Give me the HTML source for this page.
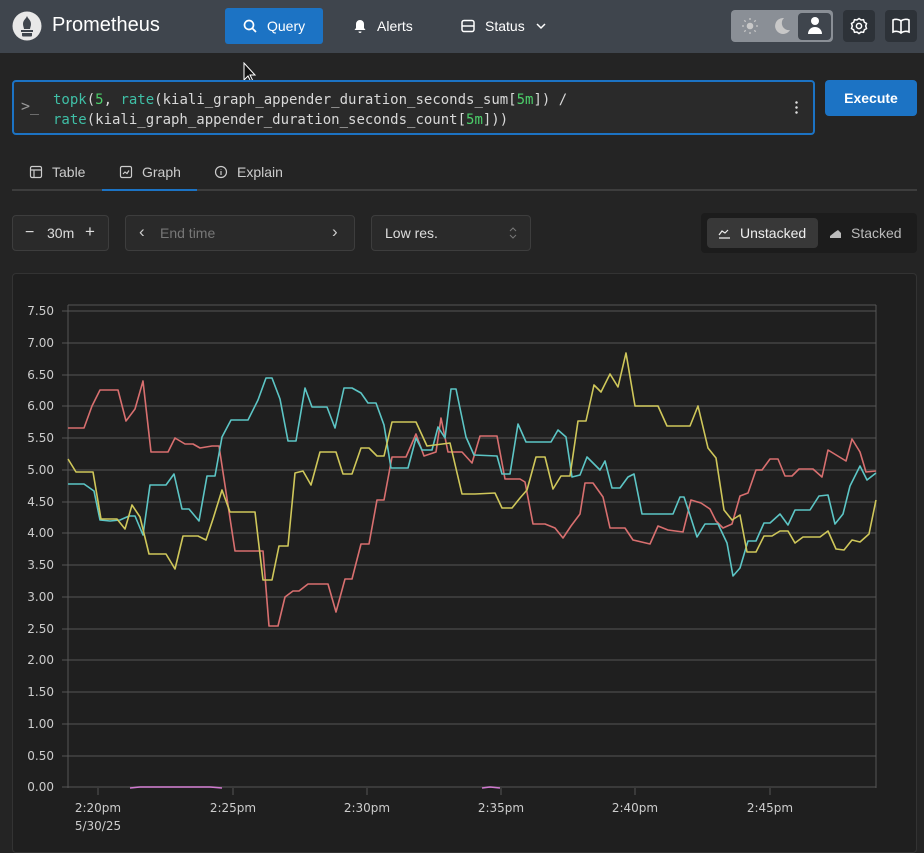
<!DOCTYPE html>
<html><head><meta charset="utf-8"><style>
*{box-sizing:border-box;margin:0;padding:0}
body{width:924px;height:840px;background:#242424;font-family:"Liberation Sans",sans-serif;color:#c9c9c9;position:relative;overflow:hidden;font-size:14px}
.hdr{position:absolute;left:0;top:0;width:924px;height:53px;background:#3f454d}
.abs{position:absolute}
.btn{position:absolute;display:flex;align-items:center;gap:9px;color:#fff;font-size:14px}
.box{position:absolute;border:1px solid #3d3d3d;border-radius:4px;background:#2a2a2a}
.mono{font-family:"DejaVu Sans Mono","Liberation Mono",monospace;font-size:14px}
</style></head><body>
<div class="hdr"></div>
<svg class="abs" style="left:12px;top:11px" width="30" height="30" viewBox="0 0 30 30"><circle cx="15" cy="15" r="14.5" fill="#e8e8e8"/><path d="M9 19h12v2H9zM10 22h10v2.5a1 1 0 0 1-1 1h-8a1 1 0 0 1-1-1z" fill="#3f454d"/><path d="M15 5c1 3 4 4 4 8 0 2-1 4-1 5h-6c0-1-1-3-1-5 0-4 3-5 4-8z" fill="#3f454d"/></svg>
<div class="abs" style="left:52px;top:14px;font-size:20px;color:#fff">Prometheus</div>
<div class="abs" style="left:225px;top:8px;width:98px;height:36px;background:#1c73c4;border-radius:3px"></div>
<div class="btn" style="left:242px;top:18px"><svg width="16" height="16" viewBox="0 0 16 16" fill="none" stroke="#fff" stroke-width="1.7"><circle cx="7" cy="7" r="4.5"/><path d="M10.5 10.5l3.5 3.5"/></svg>Query</div>
<div class="btn" style="left:352px;top:18px"><svg width="16" height="16" viewBox="0 0 16 16" fill="#fff"><path d="M8 2a4 4 0 0 1 4 4v4l1.5 2h-11L4 10V6a4 4 0 0 1 4-4zM6.5 13.5h3a1.5 1.5 0 0 1-3 0z"/></svg>Alerts</div>
<div class="btn" style="left:460px;top:18px"><svg width="16" height="16" viewBox="0 0 16 16" fill="none" stroke="#fff" stroke-width="1.5"><rect x="2" y="2.5" width="12" height="11" rx="2"/><path d="M2 8h12"/></svg>Status<svg width="14" height="14" viewBox="0 0 14 14" fill="none" stroke="#fff" stroke-width="1.5"><path d="M3 5l4 4 4-4"/></svg></div>
<div class="abs" style="left:731px;top:10px;width:102px;height:32px;background:#8a8f96;border-radius:4px"></div>
<div class="abs" style="left:798px;top:13px;width:33px;height:27px;background:#3f454d;border-radius:4px"></div>
<svg class="abs" style="left:741px;top:17px" width="18" height="18" viewBox="0 0 18 18"><circle cx="9" cy="9" r="3.3" fill="#c8c8c8"/><g stroke="#c8c8c8" stroke-width="1.3"><path d="M9 1v2M9 15v2M1 9h2M15 9h2M3.3 3.3l1.4 1.4M13.3 13.3l1.4 1.4M3.3 14.7l1.4-1.4M13.3 4.7l1.4-1.4"/></g></svg>
<svg class="abs" style="left:772px;top:16px" width="20" height="20" viewBox="0 0 20 20"><path d="M12 2a8 8 0 1 0 6 12A7 7 0 0 1 12 2z" fill="#c8c8c8"/></svg>
<svg class="abs" style="left:806px;top:16px" width="18" height="20" viewBox="0 0 18 20" fill="#fff"><circle cx="9" cy="5" r="4"/><path d="M2 18c0-4 3-7 7-7s7 3 7 7z"/></svg>
<div class="abs" style="left:843px;top:10px;width:32px;height:32px;background:#2d3238;border-radius:4px"></div>
<svg class="abs" style="left:850px;top:17px" width="18" height="18" viewBox="0 0 18 18" fill="none" stroke="#fff" stroke-width="1.5"><path d="M9 1.5l2 1.5 2.5-.3.8 2.4 2.2 1.4-.8 2.5.8 2.5-2.2 1.4-.8 2.4-2.5-.3-2 1.5-2-1.5-2.5.3-.8-2.4-2.2-1.4.8-2.5-.8-2.5 2.2-1.4.8-2.4 2.5.3z"/><circle cx="9" cy="9" r="2.6"/></svg>
<div class="abs" style="left:885px;top:10px;width:32px;height:32px;background:#2d3238;border-radius:4px"></div>
<svg class="abs" style="left:891px;top:17px" width="20" height="18" viewBox="0 0 20 18" fill="none" stroke="#fff" stroke-width="1.6"><path d="M10 4v12M10 4C8 2 4 2 2 3v12c2-1 6-1 8 1 2-2 6-2 8-1V3c-2-1-6-1-8 1z"/></svg>
<svg class="abs" style="left:243px;top:62px" width="14" height="22" viewBox="0 0 14 22"><path d="M1 1v17l4-4 3 6 2-1-3-6h5z" fill="#111" stroke="#fff" stroke-width="1"/></svg>

<div class="abs" style="left:12px;top:80px;width:803px;height:55px;border:2px solid #1c73c4;border-radius:4px;background:#2a2a2a"></div>
<div class="abs mono" style="left:21px;top:97px;color:#999;font-size:15px">&gt;_</div>
<div class="abs mono" style="left:53px;top:90px;line-height:20px;color:#d8d8d8;white-space:pre"><span style="color:#3fbfa6">topk</span>(<span style="color:#4ccf6a">5</span>, <span style="color:#3fbfa6">rate</span>(kiali_graph_appender_duration_seconds_sum[<span style="color:#4ccf6a">5m</span>]) /
<span style="color:#3fbfa6">rate</span>(kiali_graph_appender_duration_seconds_count[<span style="color:#4ccf6a">5m</span>]))</div>
<div class="abs" style="left:795px;top:100px;width:3px;height:14px;background:radial-gradient(circle,#ddd 1px,transparent 1.5px) 0 0/3px 5px"></div>
<div class="abs" style="left:825px;top:80px;width:92px;height:36px;background:#1c73c4;border-radius:4px;color:#fff;font-weight:bold;font-size:14px;text-align:center;line-height:36px">Execute</div>

<div class="abs" style="left:12px;top:189px;width:905px;height:2px;background:#3d3d3d"></div>
<div class="abs" style="left:102px;top:189px;width:95px;height:2px;background:#1c73c4"></div>
<div class="btn" style="left:29px;top:164px;color:#ccc"><svg width="14" height="14" viewBox="0 0 14 14" fill="none" stroke="#ccc" stroke-width="1.2"><rect x="1.5" y="1.5" width="11" height="11" rx="1.5"/><path d="M1.5 5h11M5 5v7.5"/></svg>Table</div>
<div class="btn" style="left:119px;top:164px;color:#ccc"><svg width="14" height="14" viewBox="0 0 14 14" fill="none" stroke="#ccc" stroke-width="1.2"><rect x="1.5" y="1.5" width="11" height="11" rx="1.5"/><path d="M4 9l2-2 2 1.5 2-3"/></svg>Graph</div>
<div class="btn" style="left:214px;top:164px;color:#ccc"><svg width="14" height="14" viewBox="0 0 14 14" fill="none" stroke="#ccc" stroke-width="1.2"><circle cx="7" cy="7" r="5.5"/><path d="M7 6v4M7 4v.5"/></svg>Explain</div>

<div class="box" style="left:12px;top:215px;width:97px;height:36px"></div>
<div class="abs" style="left:25px;top:224px;color:#ddd;font-size:16px">−</div>
<div class="abs" style="left:47px;top:225px;color:#ddd">30m</div>
<div class="abs" style="left:85px;top:222px;color:#ddd;font-size:17px">+</div>
<div class="box" style="left:125px;top:215px;width:230px;height:36px"></div>
<div class="abs" style="left:139px;top:222px;color:#ccc;font-size:17px">‹</div>
<div class="abs" style="left:160px;top:225px;color:#777">End time</div>
<div class="abs" style="left:332px;top:222px;color:#ccc;font-size:17px">›</div>
<div class="box" style="left:371px;top:215px;width:160px;height:36px"></div>
<div class="abs" style="left:385px;top:225px;color:#ddd">Low res.</div>
<svg class="abs" style="left:508px;top:226px" width="10" height="14" viewBox="0 0 10 14" fill="none" stroke="#777" stroke-width="1"><path d="M2 5l3-3 3 3M2 9l3 3 3-3"/></svg>
<div class="abs" style="left:701px;top:213px;width:216px;height:40px;background:#1c1c1c;border-radius:4px"></div>
<div class="abs" style="left:707px;top:218px;width:111px;height:30px;background:#383838;border-radius:4px"></div>
<div class="btn" style="left:718px;top:225px;color:#eee"><svg width="13" height="12" viewBox="0 0 13 12" fill="none" stroke="#eee" stroke-width="1.2"><path d="M1 11h11M1 8l3-4 3 2 3-3"/></svg>Unstacked</div>
<div class="btn" style="left:829px;top:225px;color:#bbb"><svg width="13" height="12" viewBox="0 0 13 12" fill="#bbb"><path d="M1 11h11V6L9 3 6 5 1 9z"/></svg>Stacked</div>

<div class="abs" style="left:12px;top:273px;width:905px;height:580px;border:1px solid #333;border-radius:4px;background:#1f1f1f"></div>
<svg class="abs" style="left:0;top:0" width="924" height="840" font-family="DejaVu Sans,sans-serif" font-size="12" fill="#ccc">
<g stroke="#3a3a3a" stroke-width="2">
<path d="M62 311H876M62 343H876M62 375H876M62 406H876M62 438H876M62 470H876M62 502H876M62 533H876M62 565H876M62 597H876M62 629H876M62 660H876M62 692H876M62 724H876M62 756H876M62 787H876"/>
<path d="M98 788v7M233 788v7M367 788v7M501 788v7M635 788v7M770 788v7"/></g>
<path d="M68 305V788M876 305V788M68 305H876" stroke="#555" stroke-width="1" fill="none"/>
<g text-anchor="end"><text x="54" y="315">7.50</text><text x="54" y="347">7.00</text><text x="54" y="379">6.50</text><text x="54" y="410">6.00</text><text x="54" y="442">5.50</text><text x="54" y="474">5.00</text><text x="54" y="506">4.50</text><text x="54" y="537">4.00</text><text x="54" y="569">3.50</text><text x="54" y="601">3.00</text><text x="54" y="633">2.50</text><text x="54" y="664">2.00</text><text x="54" y="696">1.50</text><text x="54" y="728">1.00</text><text x="54" y="760">0.50</text><text x="54" y="791">0.00</text></g>
<g text-anchor="middle"><text x="98" y="812">2:20pm</text><text x="98" y="830">5/30/25</text><text x="233" y="812">2:25pm</text><text x="367" y="812">2:30pm</text><text x="501" y="812">2:35pm</text><text x="635" y="812">2:40pm</text><text x="770" y="812">2:45pm</text></g>
<g fill="none" stroke-width="1.6" stroke-linejoin="round">
<path stroke="#d86f6f" d="M68 428L84 428L92 406L100 390L118 390L126 421L135 409L143 381L151 452L168 452L175 438L185 444L193 444L200 448L212 446L219 446L235 551L263 551L269 626L278 626L285 597L293 591L299 591L308 584L328 584L336 612L345 579L352 579L361 544L369 544L377 500L384 500L392 457L406 457L416 434L424 456L436 452L441 418L448 452L462 452L472 463L480 436L497 436L505 479L520 479L525 482L533 524L545 524L555 528L563 538L571 526L580 514L585 483L593 483L603 497L610 528L625 528L633 540L650 544L658 526L668 530L683 532L691 500L701 503L710 509L716 521L723 528L732 524L740 496L748 493L756 470L762 470L770 459L778 459L785 476L792 476L799 469L813 469L822 477L828 450L846 461L852 439L860 452L866 472L876 471"/>
<path stroke="#5cc5c5" d="M68 484L84 484L94 491L100 520L110 521L120 520L129 516L135 516L143 535L150 485L166 485L174 474L182 509L189 509L199 521L207 476L215 476L222 437L231 420L248 420L258 400L266 378L272 378L280 399L288 441L296 441L305 388L312 407L327 407L335 428L344 388L352 388L361 393L368 403L376 403L384 425L391 468L408 468L416 438L422 450L432 450L438 427L445 438L451 389L456 389L466 437L474 455L497 456L502 474L510 474L518 424L526 442L551 442L558 430L566 437L572 477L580 475L587 457L600 470L605 461L612 488L620 488L628 477L634 474L642 514L673 514L680 497L684 497L690 515L697 537L705 524L718 524L727 543L733 576L740 568L748 541L756 541L764 523L770 523L780 514L788 525L795 510L810 510L819 496L828 495L835 524L843 514L850 486L860 466L867 480L876 473"/>
<path stroke="#cfc75a" d="M68 459L76 472L93 472L101 519L117 519L125 529L132 505L140 517L149 554L166 554L175 569L183 536L198 536L206 540L213 519L222 490L230 512L255 512L263 580L272 580L279 546L288 546L295 473L303 471L311 485L320 452L336 452L343 474L352 474L361 448L369 448L377 456L384 456L392 422L416 422L427 446L450 443L462 494L475 494L495 493L502 508L512 508L520 498L527 490L536 457L545 457L553 489L561 476L570 476L578 421L586 421L594 385L601 392L610 374L618 387L626 353L635 406L658 406L667 426L690 426L698 406L708 448L716 458L724 510L732 520L740 515L747 552L756 552L764 536L772 536L780 531L788 531L795 543L803 537L820 537L828 531L836 549L844 550L852 540L860 542L869 534L876 500"/>
<path stroke="#d07ad0" d="M130 788L140 787L210 787L222 788M482 788L490 787L500 788"/>
</g>
</svg>
</body></html>
